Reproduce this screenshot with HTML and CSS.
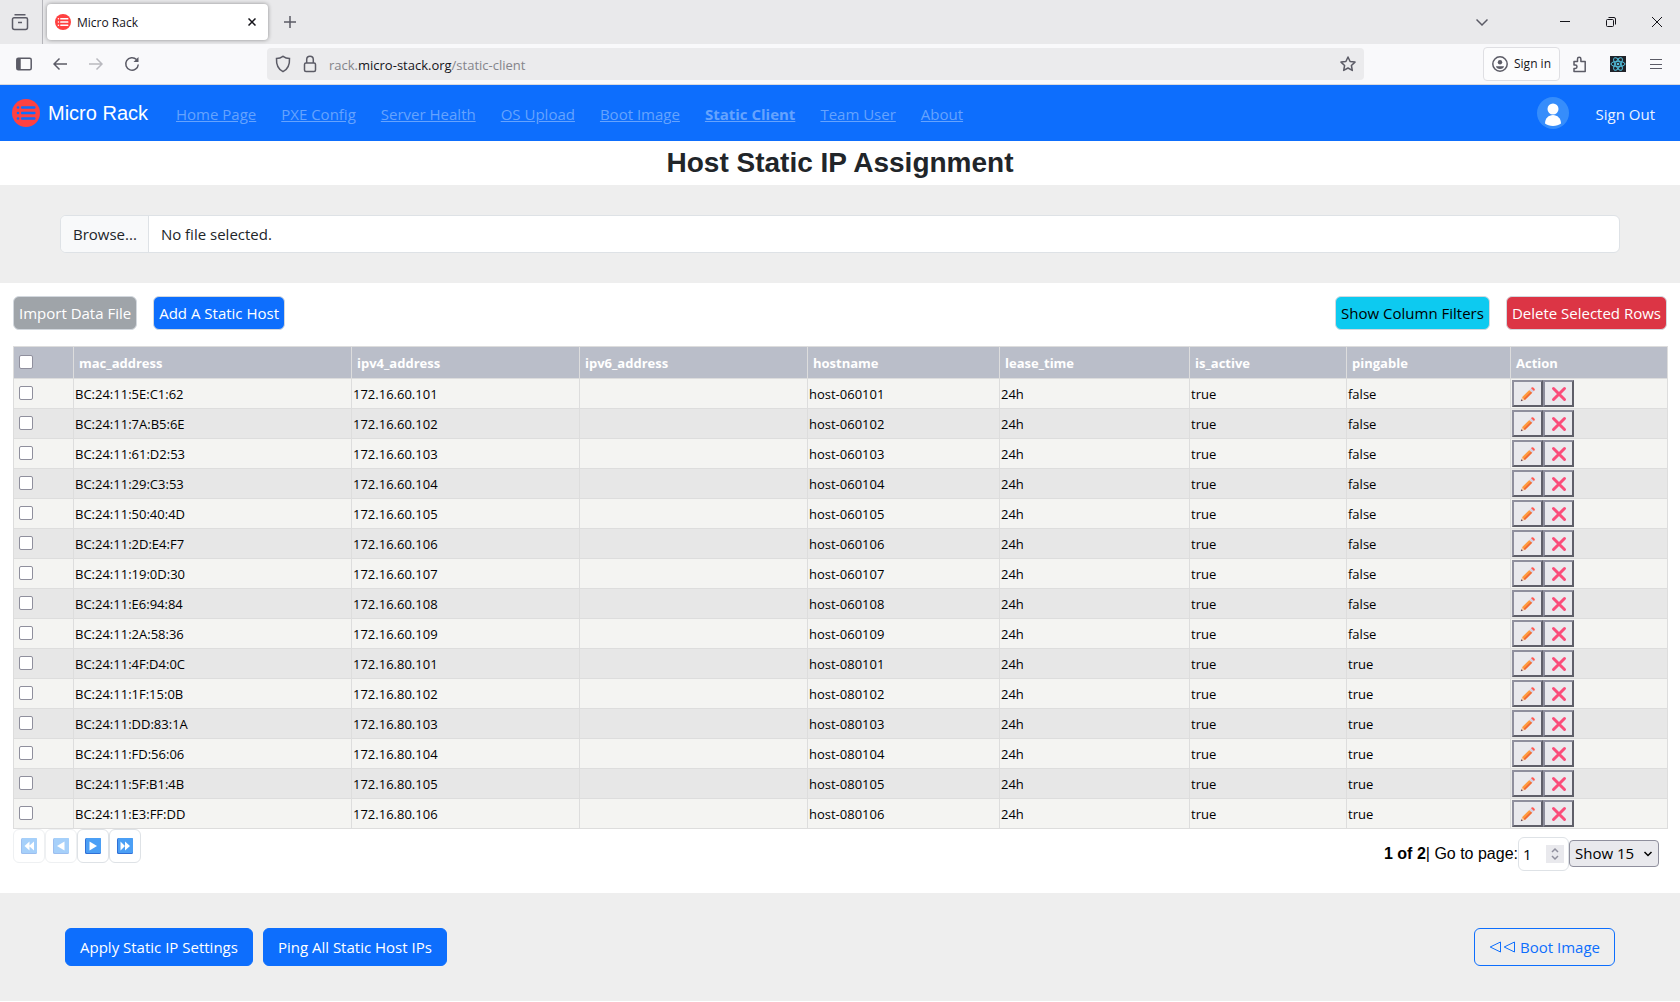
FILE: index.html
```html
<!DOCTYPE html>
<html lang="en">
<head>
    <meta charset="UTF-8">
    <title>Micro Rack</title>
    <link rel="stylesheet" href="styles.css">
</head>
<body>
    <!-- Shared icons -->
    <svg class="icon-defs" aria-hidden="true">
        <symbol id="icon-pencil" viewBox="0 0 16 16">
            <path d="M.8 15.200l1.200-4 2.900 2.800z" fill="#f3c9a0"/>
            <path d="M.8 15.200l.6-2 1.400 1.400z" fill="#5a3a50"/>
            <path d="M2 11.200L9.300 3.900l2.900 2.900L4.900 14z" fill="#ff9a3c"/>
            <path d="M3.700 12.800L11 5.500l1.200 1.300L4.900 14z" fill="#f0683a"/>
            <path d="M9.300 3.900l1.700-1.700 2.900 2.900-1.700 1.700z" fill="#d5cfe3"/>
            <path d="M11 2.200l.6-.6a1.200 1.200 0 0 1 1.700 0l1.200 1.200a1.200 1.200 0 0 1 0 1.700l-.6.6z" fill="#ff5b52"/>
        </symbol>
        <symbol id="icon-cross" viewBox="0 0 16 16">
            <path d="M2.500 2.500l11 11M13.500 2.500l-11 11" stroke="#fb4d7a" stroke-width="3" stroke-linecap="round"/>
        </symbol>
        <symbol id="icon-logo" viewBox="0 0 28 28">
            <circle cx="14" cy="14" r="14" fill="#ff4141"/>
            <g class="logo-lines">
                <circle cx="6" cy="8.500" r="1.300"/>
                <circle cx="6" cy="14" r="1.300"/>
                <circle cx="6" cy="19.500" r="1.300"/>
                <rect x="9" y="7.200" width="14.500" height="2.600" rx="1"/>
                <rect x="9" y="12.700" width="14.500" height="2.600" rx="1"/>
                <rect x="9" y="18.200" width="14.500" height="2.600" rx="1"/>
            </g>
        </symbol>
    </svg>

    <!-- Tab Strip -->
    <div class="tab-strip">
        <button class="tab-history" aria-label="Recent browsing">
            <svg width="18" height="18" viewBox="0 0 18 18" class="line-icon"><path d="M3.500 1.800h11M3 4.800h12a1.500 1.500 0 0 1 1.500 1.500v8.200a2 2 0 0 1-2 2h-11a2 2 0 0 1-2-2V6.300A1.500 1.500 0 0 1 3 4.800zM7 9.500h4"/></svg>
        </button>
        <div class="tab">
            <svg class="tab-logo" width="16" height="16"><use href="#icon-logo"/></svg>
            <span class="tab-title">Micro Rack</span>
            <button class="icon-button" aria-label="Close tab">
                <svg width="8" height="8" viewBox="0 0 8 8" class="line-icon dark"><path d="M.5.5l7 7M7.500.5l-7 7"/></svg>
            </button>
        </div>
        <button class="icon-button new-tab" aria-label="New tab">
            <svg width="12" height="12" viewBox="0 0 12 12" class="line-icon"><path d="M6 0v12M0 6h12"/></svg>
        </button>
        <div class="window-controls">
            <button class="icon-button" aria-label="List all tabs">
                <svg width="12" height="12" viewBox="0 0 12 12" class="line-icon"><path d="M.5 3.500L6 9l5.500-5.500"/></svg>
            </button>
            <button class="icon-button minimize" aria-label="Minimize">
                <svg width="10" height="10" viewBox="0 0 10 10" class="line-icon dark thin"><path d="M0 4.500h10"/></svg>
            </button>
            <button class="icon-button" aria-label="Restore">
                <svg width="10" height="10" viewBox="0 0 10 10" class="line-icon dark thin"><path d="M1.500 2.500h5a1 1 0 0 1 1 1v5a1 1 0 0 1-1 1h-5a1 1 0 0 1-1-1v-5a1 1 0 0 1 1-1zM2.500.5h5.500a1.500 1.500 0 0 1 1.500 1.500v5.500"/></svg>
            </button>
            <button class="icon-button" aria-label="Close">
                <svg width="10" height="10" viewBox="0 0 10 10" class="line-icon dark thin"><path d="M0 0l10 10M10 0L0 10"/></svg>
            </button>
        </div>
    </div>

    <!-- Address Toolbar -->
    <div class="toolbar">
        <div class="toolbar-nav">
            <button class="icon-button" aria-label="Sidebar">
                <svg width="16" height="14" viewBox="0 0 16 14" class="line-icon"><rect x=".8" y="1.300" width="14.400" height="11.400" rx="1.500"/><path d="M1 2h3v10H1z" fill="#5b5b66" stroke="none"/><path d="M4 1.500v11"/></svg>
            </button>
            <button class="icon-button" aria-label="Back">
                <svg width="14" height="14" viewBox="0 0 14 14" class="line-icon"><path d="M14 7H1M6.500 1.500L1 7l5.500 5.500"/></svg>
            </button>
            <button class="icon-button" aria-label="Forward" disabled>
                <svg width="14" height="14" viewBox="0 0 14 14" class="line-icon"><path d="M0 7h13M7.500 1.500L13 7l-5.500 5.500"/></svg>
            </button>
            <button class="icon-button" aria-label="Reload">
                <svg width="16" height="16" viewBox="0 0 16 16" class="line-icon"><path d="M14.300 8.500A6.300 6.300 0 1 1 12.500 3.500"/><path d="M14.500 1v5h-5z" fill="#5b5b66" stroke="none"/></svg>
            </button>
        </div>
        <div class="url-bar">
            <svg width="16" height="18" viewBox="0 0 16 18" class="line-icon"><path d="M8 1.300c2 1.500 4.300 2.200 6.500 2.200.3 5.500-1.200 10.500-6.500 13.200C2.700 14 1.200 9 1.500 3.500 3.700 3.500 6 2.800 8 1.300z"/></svg>
            <svg width="14" height="18" viewBox="0 0 14 18" class="line-icon"><rect x="1.500" y="8" width="11" height="8.500" rx="1.500"/><path d="M3.700 8V4.500a3.300 3.300 0 0 1 6.600 0V8"/></svg>
            <span class="url">rack.<span class="url-domain">micro-stack.org</span>/static-client</span>
            <svg width="16" height="16" viewBox="0 0 16 16" class="line-icon"><path d="M8 1l2.100 4.500 4.900.6-3.600 3.400.9 4.900L8 12l-4.300 2.400.9-4.900L1 6.100l4.900-.6z" stroke-linejoin="round"/></svg>
        </div>
        <div class="toolbar-actions">
            <button class="sign-in">
                <svg width="16" height="16" viewBox="0 0 16 16" class="line-icon"><circle cx="8" cy="8" r="7.200"/><circle cx="8" cy="6.200" r="2.200" fill="#5b5b66" stroke="none"/><path d="M4 10.300h8c0 1.500-1.800 2.700-4 2.700s-4-1.200-4-2.700z" fill="#5b5b66" stroke="none"/></svg>
                Sign in
            </button>
            <button class="icon-button" aria-label="Extensions">
                <svg width="16" height="17" viewBox="0 0 16 17" class="line-icon"><path d="M2 5.500h3.500V3a1.700 1.700 0 0 1 3.400 0v2.500h4.300v10H2v-3h1.300a1.700 1.700 0 0 0 0-3.400H2z" stroke-linejoin="round"/></svg>
            </button>
            <button class="icon-button" aria-label="React developer tools">
                <svg width="16" height="16" viewBox="0 0 16 16"><rect width="16" height="16" fill="#20232a"/><g fill="none" stroke="#53c1de" stroke-width="1"><ellipse cx="8" cy="8" rx="7" ry="2.700"/><ellipse cx="8" cy="8" rx="7" ry="2.700" transform="rotate(60 8 8)"/><ellipse cx="8" cy="8" rx="7" ry="2.700" transform="rotate(120 8 8)"/></g><circle cx="8" cy="8" r="1.300" fill="#53c1de"/></svg>
            </button>
            <button class="icon-button" aria-label="Menu">
                <svg width="12" height="12" viewBox="0 0 12 12" class="line-icon thin"><path d="M0 1.500h12M0 6.500h12M0 10.500h12"/></svg>
            </button>
        </div>
    </div>

    <!-- Navbar -->
    <nav class="navbar">
        <a class="brand" href="#">
            <svg width="28" height="28"><use href="#icon-logo"/></svg>
            Micro Rack
        </a>
        <div class="nav-links">
            <a href="#">Home Page</a>
            <a href="#">PXE Config</a>
            <a href="#">Server Health</a>
            <a href="#">OS Upload</a>
            <a href="#">Boot Image</a>
            <a href="#" class="active">Static Client</a>
            <a href="#">Team User</a>
            <a href="#">About</a>
        </div>
        <svg class="avatar" width="32" height="32" viewBox="0 0 32 32"><circle cx="16" cy="16" r="16" fill="#368dfb"/><circle cx="16" cy="12" r="5.500" fill="#fff"/><path d="M8 26.500c0-5 3.500-8.500 8-8.500s8 3.500 8 8.500c-2 1.600-4.800 2.500-8 2.500s-6-.9-8-2.500z" fill="#fff"/></svg>
        <a class="sign-out" href="#">Sign Out</a>
    </nav>

    <h1>Host Static IP Assignment</h1>

    <!-- File Upload -->
    <div class="upload">
        <label class="file-field">
            <input type="file">
            <span class="file-button">Browse...</span>
            <span class="file-name">No file selected.</span>
        </label>
    </div>

    <!-- Host Table -->
    <main>
        <div class="table-actions">
            <button class="btn-small gray" disabled>Import Data File</button>
            <button class="btn-small blue">Add A Static Host</button>
            <button class="btn-small cyan push">Show Column Filters</button>
            <button class="btn-small red">Delete Selected Rows</button>
        </div>

        <table>
            <colgroup>
                <col class="col-check">
                <col class="col-mac">
                <col class="col-ip">
                <col class="col-ip">
                <col class="col-host">
                <col class="col-lease">
                <col class="col-active">
                <col class="col-ping">
                <col class="col-action">
            </colgroup>
            <thead>
                <tr>
                    <th><input type="checkbox" aria-label="Select all rows"></th>
                    <th>mac_address</th>
                    <th>ipv4_address</th>
                    <th>ipv6_address</th>
                    <th>hostname</th>
                    <th>lease_time</th>
                    <th>is_active</th>
                    <th>pingable</th>
                    <th>Action</th>
                </tr>
            </thead>
            <tbody id="hostRows">
                <!-- Rows are inserted by the script below -->
            </tbody>
        </table>

        <!-- Pagination -->
        <div class="pagination">
            <div class="page-buttons">
                <button aria-label="First page" disabled>
                    <svg width="16" height="16" viewBox="0 0 16 16"><rect width="16" height="16" rx="1.500" fill="#3b7fe0"/><rect x="1" width="15" height="15" rx="1" fill="#50a3f7"/><path d="M8.500 3.500v9L3.500 8zM13 3.500v9L8 8z" fill="#fff"/></svg>
                </button>
                <button aria-label="Previous page" disabled>
                    <svg width="16" height="16" viewBox="0 0 16 16"><rect width="16" height="16" rx="1.500" fill="#3b7fe0"/><rect x="1" width="15" height="15" rx="1" fill="#50a3f7"/><path d="M11.500 3.500v9L4 8z" fill="#fff"/></svg>
                </button>
                <button aria-label="Next page">
                    <svg width="16" height="16" viewBox="0 0 16 16"><rect width="16" height="16" rx="1.500" fill="#2f6fd6"/><rect x="1" width="15" height="15" rx="1" fill="#4b9ff5"/><path d="M4.500 3.500v9L12 8z" fill="#fff"/></svg>
                </button>
                <button aria-label="Last page">
                    <svg width="16" height="16" viewBox="0 0 16 16"><rect width="16" height="16" rx="1.500" fill="#2f6fd6"/><rect x="1" width="15" height="15" rx="1" fill="#4b9ff5"/><path d="M3.500 3.500v9L8 8zM8 3.500v9L13 8z" fill="#fff"/></svg>
                </button>
            </div>
            <div class="page-jump">
                <strong>1 of 2</strong>
                <label for="pageNumber">| Go to page:</label>
                <span class="page-number">
                    <input type="number" id="pageNumber" value="1">
                    <svg width="18" height="18" viewBox="0 0 18 18"><rect width="18" height="18" fill="#e9e9ed"/><path d="M6 7l3-3 3 3M6 11l3 3 3-3" fill="none" stroke="#8f8f9d" stroke-width="1.500"/></svg>
                </span>
                <span class="page-size">
                    <select aria-label="Rows per page">
                        <option>Show 15</option>
                        <option>Show 30</option>
                    </select>
                    <svg width="10" height="10" viewBox="0 0 10 10"><path d="M1.500 3L5 6.500 8.500 3" fill="none" stroke="#000" stroke-width="1.500"/></svg>
                </span>
            </div>
        </div>
    </main>

    <!-- Bottom Actions -->
    <footer>
        <button class="btn">Apply Static IP Settings</button>
        <button class="btn">Ping All Static Host IPs</button>
        <button class="btn outline push">
            <svg width="27" height="12" viewBox="0 0 27 12"><path d="M11.500 1v10L1.200 6zM25.500 1v10L15.200 6z" fill="none" stroke="currentColor"/></svg>
            Boot Image
        </button>
    </footer>

    <script>
        // mac_address, ipv4_address, hostname, pingable
        const hosts = [
            ['BC:24:11:5E:C1:62', '172.16.60.101', 'host-060101', false],
            ['BC:24:11:7A:B5:6E', '172.16.60.102', 'host-060102', false],
            ['BC:24:11:61:D2:53', '172.16.60.103', 'host-060103', false],
            ['BC:24:11:29:C3:53', '172.16.60.104', 'host-060104', false],
            ['BC:24:11:50:40:4D', '172.16.60.105', 'host-060105', false],
            ['BC:24:11:2D:E4:F7', '172.16.60.106', 'host-060106', false],
            ['BC:24:11:19:0D:30', '172.16.60.107', 'host-060107', false],
            ['BC:24:11:E6:94:84', '172.16.60.108', 'host-060108', false],
            ['BC:24:11:2A:58:36', '172.16.60.109', 'host-060109', false],
            ['BC:24:11:4F:D4:0C', '172.16.80.101', 'host-080101', true],
            ['BC:24:11:1F:15:0B', '172.16.80.102', 'host-080102', true],
            ['BC:24:11:DD:83:1A', '172.16.80.103', 'host-080103', true],
            ['BC:24:11:FD:56:06', '172.16.80.104', 'host-080104', true],
            ['BC:24:11:5F:B1:4B', '172.16.80.105', 'host-080105', true],
            ['BC:24:11:E3:FF:DD', '172.16.80.106', 'host-080106', true]
        ];

        document.getElementById('hostRows').innerHTML = hosts.map(([mac, ipv4, hostname, pingable]) => `
            <tr>
                <td class="check-cell"><input type="checkbox" aria-label="Select ${hostname}"></td>
                <td>${mac}</td>
                <td>${ipv4}</td>
                <td></td>
                <td>${hostname}</td>
                <td>24h</td>
                <td>true</td>
                <td>${pingable}</td>
                <td>
                    <div class="row-actions">
                        <button aria-label="Edit ${hostname}"><svg width="16" height="16"><use href="#icon-pencil"/></svg></button>
                        <button aria-label="Delete ${hostname}"><svg width="16" height="16"><use href="#icon-cross"/></svg></button>
                    </div>
                </td>
            </tr>`).join('');
    </script>
</body>
</html>
```

FILE: styles.css
```css
* {
    box-sizing: border-box;
}

body {
    margin: 0;
    font-family: "Open Sans", "Noto Sans", sans-serif;
    font-size: 15px;
    line-height: 24px;
    color: #212529;
    background-color: white;
}

button, input, select {
    font-family: inherit;
    font-size: inherit;
    line-height: inherit;
    color: inherit;
}

svg {
    display: block;
    flex-shrink: 0;
}

.icon-defs {
    display: none;
}

.line-icon {
    fill: none;
    stroke: #5b5b66;
    stroke-width: 1.5;
}

.line-icon.dark {
    stroke: #15141a;
}

.line-icon.thin {
    stroke-width: 1;
}

.icon-button {
    display: flex;
    align-items: center;
    justify-content: center;
    width: 36px;
    height: 32px;
    padding: 0;
    border: none;
    background: none;
}

.icon-button:disabled {
    opacity: 0.4;
}

.push {
    margin-left: auto;
}

/* Tab Strip */
.tab-strip {
    display: flex;
    align-items: center;
    height: 44px;
    background-color: #e9e9eb;
    font-size: 12px;
}

.tab-history {
    display: flex;
    align-items: center;
    width: 43px;
    height: 44px;
    padding: 0 0 0 11px;
    border: none;
    border-right: 1px solid #b5b5ba;
    background: none;
}

.tab {
    display: flex;
    align-items: center;
    width: 221px;
    height: 36px;
    margin-left: 4px;
    padding-left: 8px;
    border-radius: 4px;
    background-color: white;
    box-shadow: 0 0 4px rgba(0, 0, 0, 0.4);
    color: #15141a;
}

.tab-logo {
    --logo-line: white;
    margin-right: 6px;
}

.tab-title {
    padding-top: 2px;
}

.tab .icon-button {
    width: 32px;
    margin-left: auto;
}

.new-tab {
    margin-left: 4px;
}

.logo-lines {
    fill: var(--logo-line, #0d6efd);
}

.window-controls {
    display: flex;
    margin-left: auto;
}

.window-controls .icon-button {
    width: 46px;
}

.window-controls .minimize {
    margin-left: 37px;
}

/* Address Toolbar */
.toolbar {
    display: flex;
    align-items: center;
    height: 41px;
    background-color: #f9f9fb;
    border-bottom: 1px solid #d9d9dd;
}

.toolbar-nav {
    display: flex;
    width: 267px;
    padding-left: 6px;
}

.url-bar {
    display: flex;
    flex: 1;
    align-items: center;
    gap: 12px;
    height: 32px;
    padding: 0 8px;
    border-radius: 4px;
    background-color: #ebebed;
}

.url {
    flex: 1;
    padding-top: 2px;
    font-size: 13px;
    color: #84848a;
}

.url-domain {
    color: #15141a;
}

.toolbar-actions {
    display: flex;
    align-items: center;
    margin-left: 119px;
    padding-right: 5px;
}

.toolbar-actions .icon-button {
    width: 38px;
}

.sign-in {
    display: flex;
    align-items: center;
    gap: 6px;
    height: 34px;
    margin-right: 1px;
    padding: 0 8px;
    border: 1px solid #dfdfe3;
    border-radius: 4px;
    background-color: #fcfcfd;
    font-size: 12px;
    color: #15141a;
}

/* Navbar */
.navbar {
    display: flex;
    align-items: center;
    height: 56px;
    padding: 0 25px 0 12px;
    background-color: #0d6efd;
}

.brand {
    display: flex;
    align-items: center;
    gap: 8px;
    margin-right: 28px;
    font-family: "Liberation Sans", Arial, sans-serif;
    font-size: 20px;
    color: white;
    text-decoration: none;
}

.nav-links {
    display: flex;
    flex: 1;
    gap: 25px;
    padding-top: 2px;
}

.nav-links a {
    color: #65a3fe;
}

.nav-links .active {
    font-weight: bold;
}

.avatar {
    margin-right: 27px;
}

.sign-out {
    padding-top: 2px;
    color: #eaf2ff;
    text-decoration: none;
}

h1 {
    margin: 0;
    padding: 5px 0;
    font-family: "Liberation Sans", Arial, sans-serif;
    font-size: 28px;
    line-height: 34px;
    text-align: center;
}

/* File Upload */
.upload {
    padding: 30px 60px;
    background-color: #eeeeee;
}

.file-field {
    display: flex;
    height: 38px;
    border: 1px solid #dee2e6;
    border-radius: 6px;
    background-color: white;
    line-height: 36px;
    overflow: hidden;
}

.file-field input {
    width: 0;
    opacity: 0;
    padding: 0;
}

.file-button {
    padding: 0 11px 0 12px;
    border-right: 1px solid #dee2e6;
    background-color: #f8f9fa;
}

.file-name {
    padding: 0 12px;
}

/* Host Table */
main {
    padding: 13px 13px 21px;
}

.table-actions {
    display: flex;
    gap: 16px;
    margin-bottom: 16px;
}

.btn-small {
    height: 34px;
    padding: 0 5px;
    border: 1px solid #d3d8de;
    border-radius: 6px;
    color: white;
}

.gray {
    background-color: #9fa4a9;
}

.blue {
    background-color: #0d6efd;
}

.cyan {
    background-color: #0dcaf0;
    color: black;
}

.red {
    background-color: #dc3545;
}

table {
    width: 100%;
    table-layout: fixed;
    border-collapse: collapse;
    font-size: 13px;
    line-height: 20px;
    color: black;
}

.col-check { width: 60px; }
.col-mac { width: 278px; }
.col-ip { width: 228px; }
.col-host { width: 192px; }
.col-lease { width: 190px; }
.col-active { width: 157px; }
.col-ping { width: 164px; }
.col-action { width: 157px; }

th, td {
    border: 1px solid #dddddd;
    text-align: left;
}

th {
    height: 32px;
    padding: 0 5px;
    background-color: #babec9;
    color: white;
}

td {
    height: 30px;
    padding: 0 1px;
}

.check-cell {
    padding: 0 5px;
}

tbody tr {
    background-color: #e7e7e7;
}

tbody tr:nth-child(odd) {
    background-color: #f4f4f2;
}

input[type="checkbox"] {
    display: block;
    appearance: none;
    width: 14px;
    height: 14px;
    margin: 0 0 2px;
    border: 1px solid #8f8f9d;
    border-radius: 2px;
    background-color: white;
}

.row-actions {
    display: flex;
}

.row-actions button {
    display: flex;
    align-items: center;
    justify-content: center;
    width: 31px;
    height: 27px;
    padding: 0;
    border: 2px solid;
    border-color: #8f8f9d #5f5f69 #5f5f69 #8f8f9d;
    background-color: #e9e9ed;
}

/* Pagination */
.pagination {
    display: flex;
    align-items: flex-start;
    justify-content: space-between;
    padding-right: 8px;
}

.page-buttons {
    display: flex;
}

.page-buttons button {
    display: flex;
    align-items: center;
    justify-content: center;
    width: 32px;
    height: 34px;
    padding: 0;
    border: 1px solid #dee2e6;
    border-radius: 6px;
    background-color: white;
}

.page-buttons button:disabled {
    opacity: 0.5;
}

.page-jump {
    display: flex;
    align-items: center;
    padding: 8px 0 1px;
    font-family: "Liberation Sans", Arial, sans-serif;
    font-size: 16px;
    color: black;
}

.page-number {
    display: flex;
    align-items: center;
    width: 51px;
    height: 34px;
    padding: 0 4px;
    border: 1px solid #dee2e6;
    border-radius: 6px;
    font-family: "Open Sans", "Noto Sans", sans-serif;
    font-size: 15px;
}

.page-number input {
    flex: 1;
    min-width: 0;
    padding: 0;
    border: none;
    background: none;
    appearance: textfield;
}

.page-number input::-webkit-inner-spin-button {
    display: none;
}

.page-size {
    position: relative;
    margin-bottom: 2px;
    font-family: "Open Sans", "Noto Sans", sans-serif;
    font-size: 15px;
}

.page-size select {
    display: block;
    appearance: none;
    width: 90px;
    height: 27px;
    padding: 0 5px;
    border: 1px solid #8f8f9d;
    border-radius: 4px;
    background-color: #e9e9ed;
}

.page-size svg {
    position: absolute;
    top: 9px;
    right: 6px;
    pointer-events: none;
}

/* Bottom Actions */
footer {
    display: flex;
    gap: 10px;
    padding: 35px 65px;
    background-color: #eeeeee;
}

.btn {
    display: flex;
    align-items: center;
    gap: 4px;
    height: 38px;
    padding: 0 14px;
    border: 1px solid #0d6efd;
    border-radius: 6px;
    background-color: #0d6efd;
    color: white;
}

.btn.outline {
    background: none;
    color: #0d6efd;
}
```
